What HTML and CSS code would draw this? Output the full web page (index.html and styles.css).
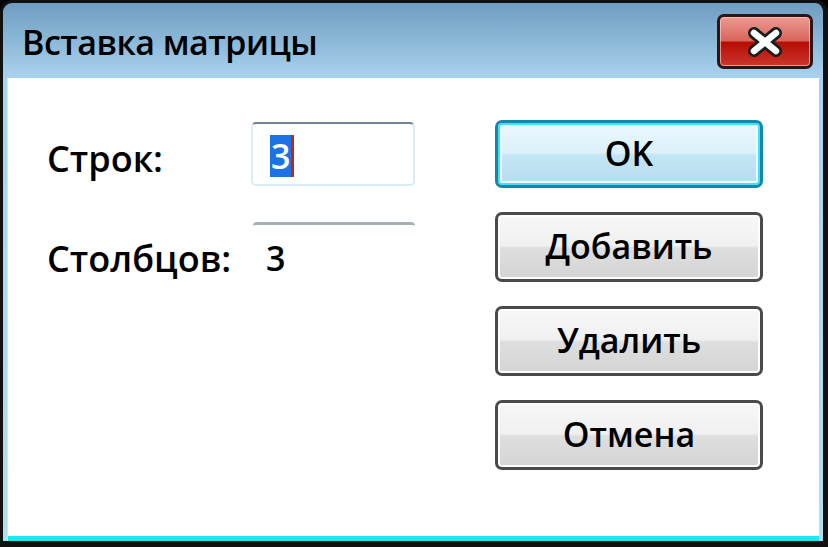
FILE: index.html
```html
<!DOCTYPE html>
<html lang="ru">
<head>
    <meta charset="UTF-8">
    <meta name="viewport" content="width=device-width, initial-scale=1.0">
    <title>Вставка матрицы</title>
    <link rel="stylesheet" href="styles.css">
</head>
<body>
    <div class="window">
        <div class="titlebar">
            <span class="title">Вставка матрицы</span>
            <button class="close" title="Закрыть">
                <svg width="40" height="30" viewBox="0 0 40 30">
                    <path d="M9 6 L31 24 M31 6 L9 24" stroke="#1c1c1c" stroke-width="12" stroke-linecap="round"/>
                    <path d="M9 6 L31 24 M31 6 L9 24" stroke="#ffffff" stroke-width="6.5" stroke-linecap="round"/>
                </svg>
            </button>
        </div>

        <div class="client">
            <div class="fields">
                <label class="label" for="rows">Строк:</label>
                <div class="edit edit-focus" id="rows"><span class="sel">3</span><span class="caret"></span></div>

                <label class="label" for="cols">Столбцов:</label>
                <div class="edit edit-flat" id="cols">3</div>
            </div>

            <div class="buttons">
                <button class="btn btn-default">OK</button>
                <button class="btn">Добавить</button>
                <button class="btn">Удалить</button>
                <button class="btn">Отмена</button>
            </div>
        </div>
    </div>
</body>
</html>
```

FILE: styles.css
```css
* {
    box-sizing: border-box;
}

body {
    margin: 0;
    background: #000;
    font-family: 'Open Sans', 'Noto Sans', sans-serif;
    font-weight: 600;
    color: #000;
}

.window {
    width: 828px;
    height: 547px;
    border: 3px solid #111;
    border-right-width: 5px;
    border-bottom-width: 6px;
    border-radius: 12px 12px 0 0;
    background: linear-gradient(to bottom, #6f9dc1 0%, #a9d2ee 14%, #b6dcf4 100%);
    display: flex;
    flex-direction: column;
    padding: 0 4px 0 5px;
}

.titlebar {
    height: 75px;
    display: flex;
    align-items: center;
    padding: 0 6px 0 14px;
}

.title {
    font-size: 34px;
    letter-spacing: -0.5px;
    margin-top: 2px;
}

.close {
    margin-left: auto;
    margin-top: 2px;
    width: 96px;
    height: 55px;
    border: 3px solid #2b1614;
    border-radius: 7px;
    background: linear-gradient(to bottom, #ee9a92 0%, #d9665c 48%, #b80c04 52%, #c8372c 100%);
    box-shadow: inset 0 0 0 1px rgba(255, 200, 190, 0.7);
    display: flex;
    align-items: center;
    justify-content: center;
    padding: 0;
}

.client {
    flex: 1;
    background: #fff;
    border-bottom: 5px solid #1ee8f4;
    box-shadow: -1px 0 0 #cfe6f7;
    display: flex;
    padding: 42px 56px 0 39px;
}

.fields {
    display: grid;
    grid-template-columns: 204px 164px;
    grid-template-rows: 64px 64px;
    row-gap: 36px;
    margin-top: 2px;
}

.label {
    font-size: 36px;
    display: flex;
    align-items: center;
    padding-top: 8px;
}

.edit {
    font-size: 34px;
    display: flex;
    align-items: center;
    padding-left: 17px;
    padding-top: 4px;
}

.edit-focus {
    border: 2px solid #d7ecf7;
    border-top-color: #6d8596;
    border-radius: 5px;
}

.edit-flat {
    border-top: 3px solid #a6b1b6;
    border-radius: 4px 4px 0 0;
    margin-left: 2px;
    padding-left: 13px;
}

.sel {
    background: #1d73e6;
    color: #fff;
    line-height: 42px;
    padding: 0 1px;
}

.caret {
    width: 3px;
    height: 42px;
    background: #c8260c;
}

.buttons {
    margin-left: auto;
    width: 268px;
    display: flex;
    flex-direction: column;
    gap: 24px;
}

.btn {
    height: 70px;
    font-family: inherit;
    font-weight: 600;
    font-size: 34px;
    color: #000;
    border: 3px solid #4a4a4a;
    border-radius: 7px;
    background: linear-gradient(to bottom, #f7f7f7 0%, #f0f0f0 48%, #dedede 52%, #d4d4d4 100%);
    box-shadow: inset 0 0 0 2px #fdfdfd;
    padding: 0 0 2px;
}

.btn-default {
    height: 68px;
    border-color: #1786ad;
    background: linear-gradient(to bottom, #eaf7fd 0%, #dbf1fb 48%, #c3e6f5 52%, #b6dcee 100%);
    box-shadow: inset 0 0 0 2px #3fe3f5, inset 0 0 0 4px #eefcff;
}
```
